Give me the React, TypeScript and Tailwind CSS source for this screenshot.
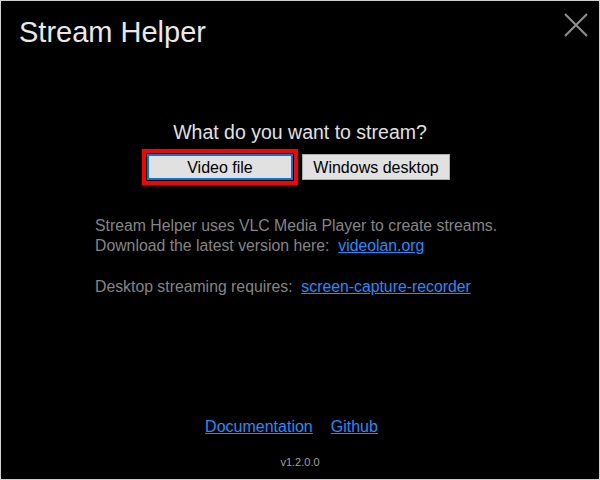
export default function App() {
  return (
    <div className="w-[600px] h-[480px] bg-black border border-[#d0d0d0] flex flex-col font-['Liberation_Sans',Arial,sans-serif]">
      <div className="flex justify-between items-start">
        <h1 className="mt-[14px] ml-[18px] text-[29px] leading-[34px] text-[#e8e8e8]">Stream Helper</h1>
        <svg className="mt-[12px] mr-[11px]" width="24" height="24" viewBox="0 0 24 24">
          <path d="M1 1 L23 23 M23 1 L1 23" stroke="#8c8c8c" strokeWidth="2.2" fill="none" />
        </svg>
      </div>

      <p className="mt-[71px] text-center text-[19.5px] leading-[24px] text-[#e0e0e0]">What do you want to stream?</p>

      <div className="mt-[5px] flex items-center gap-[4px] pl-[141px]">
        <div className="border-4 border-[#ff0000] p-[1px]">
          <button className="w-[146px] h-[26px] pt-[2px] bg-[#e1e1e1] border-2 border-[#0078d7] text-[16px] leading-none text-black">
            Video file
          </button>
        </div>
        <button className="w-[148px] h-[26px] pt-[2px] bg-[#e1e1e1] border border-[#adadad] text-[16px] leading-none text-black">
          Windows desktop
        </button>
      </div>

      <div className="mt-[31px] pl-[94px] text-[15.8px] leading-[20px] text-[#858585]">
        <p>Stream Helper uses VLC Media Player to create streams.</p>
        <p>
          Download the latest version here:{"\u00A0 "}
          <a className="text-[#1e8fff] underline">videolan.org</a>
        </p>
        <p className="mt-[21px]">
          Desktop streaming requires:{"\u00A0 "}
          <a className="text-[#1e8fff] underline">screen-capture-recorder</a>
        </p>
      </div>

      <div className="flex-1" />

      <div className="flex justify-center gap-[18px] pr-[17px] text-[16px] leading-[20px]">
        <a className="text-[#1e8fff] underline">Documentation</a>
        <a className="text-[#1e8fff] underline">Github</a>
      </div>
      <p className="mt-[19px] mb-[10px] text-center text-[11px] leading-[13px] text-[#a0a0a0]">v1.2.0.0</p>
    </div>
  )
}
